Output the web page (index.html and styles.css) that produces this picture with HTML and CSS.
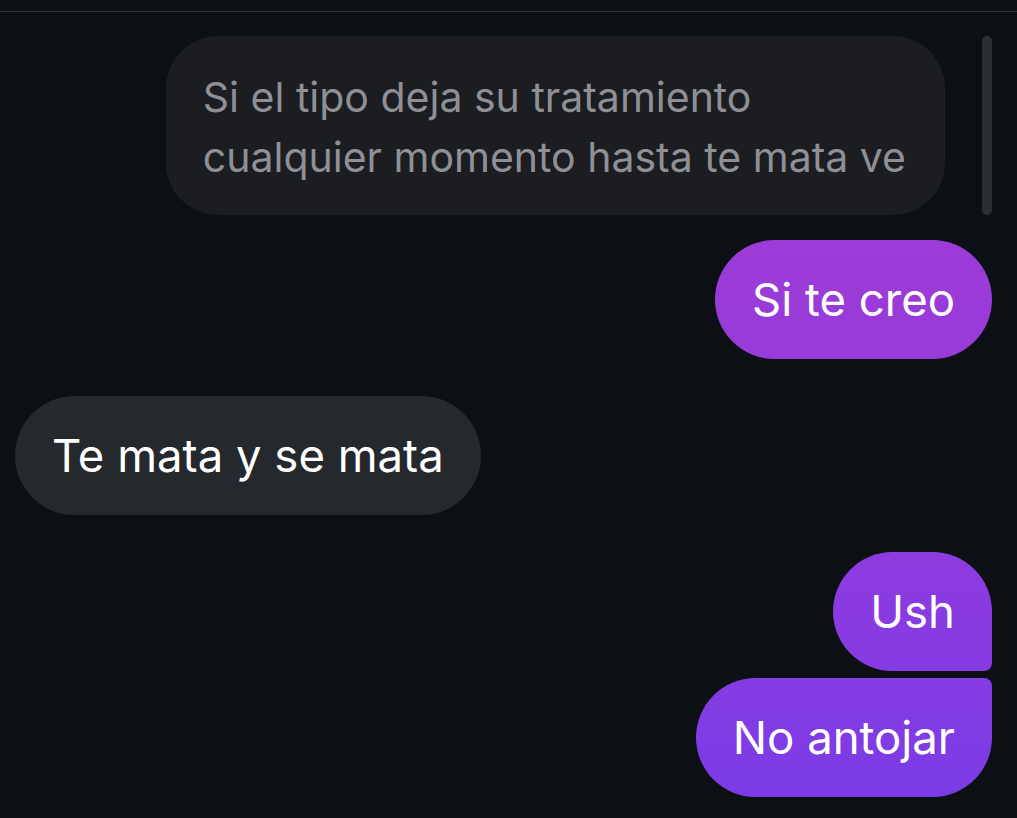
FILE: index.html
```html
<!DOCTYPE html>
<html lang="es">
<head>
    <meta charset="UTF-8">
    <meta name="viewport" content="width=device-width, initial-scale=1.0">
    <title>Chat</title>
    <link rel="stylesheet" href="styles.css">
</head>
<body>
    <div class="topbar"></div>
    <div class="chat">
        <div class="scrollbar"></div>
        <div class="row right top">
            <div class="bubble quote">Si el tipo deja su tratamiento<br>cualquier momento hasta te mata ve</div>
        </div>
        <div class="row right gap-sm">
            <div class="bubble mine">Si te creo</div>
        </div>
        <div class="row left">
            <div class="bubble theirs">Te mata y se mata</div>
        </div>
        <div class="row right">
            <div class="bubble mine first">Ush</div>
        </div>
        <div class="row right tight">
            <div class="bubble mine last">No antojar</div>
        </div>
    </div>
</body>
</html>
```

FILE: styles.css
```css
body { margin: 0; background: #0c0f14; font-family: Inter, "Noto Sans", sans-serif; height: 818px; overflow: hidden; }
.topbar { height: 11px; border-bottom: 1px solid #2a2d33; }
.chat { position: relative; display: flex; flex-direction: column; padding: 24px 25px 0 15px; }
.scrollbar { position: absolute; top: 24px; right: 25px; width: 10px; height: 179px; border-radius: 5px; background: #2b2e33; }
.row { display: flex; margin-top: 37px; }
.row.top { margin-top: 0; }
.row.gap-sm { margin-top: 25px; }
.row.tight { margin-top: 7px; }
.right { justify-content: flex-end; }
.left { justify-content: flex-start; }
.bubble { box-sizing: border-box; height: 119px; padding: 0 37px; border-radius: 60px; display: flex; align-items: center; font-size: 45.5px; color: #fff; white-space: nowrap; }
.quote { height: 179px; margin-right: 47px; border-radius: 52px; background: #1b1d21; color: #8f9095; font-size: 41px; line-height: 60px; display: block; padding: 31px 39px 0 37px; }
.mine { background: linear-gradient(180deg, #a63cd3 0px, #9a3bd8 300px, #8a3be0 600px, #7a3ce7 818px); background-attachment: fixed; }
.theirs { background: #25282d; }
.first { border-bottom-right-radius: 8px; }
.last { border-top-right-radius: 8px; }
```
